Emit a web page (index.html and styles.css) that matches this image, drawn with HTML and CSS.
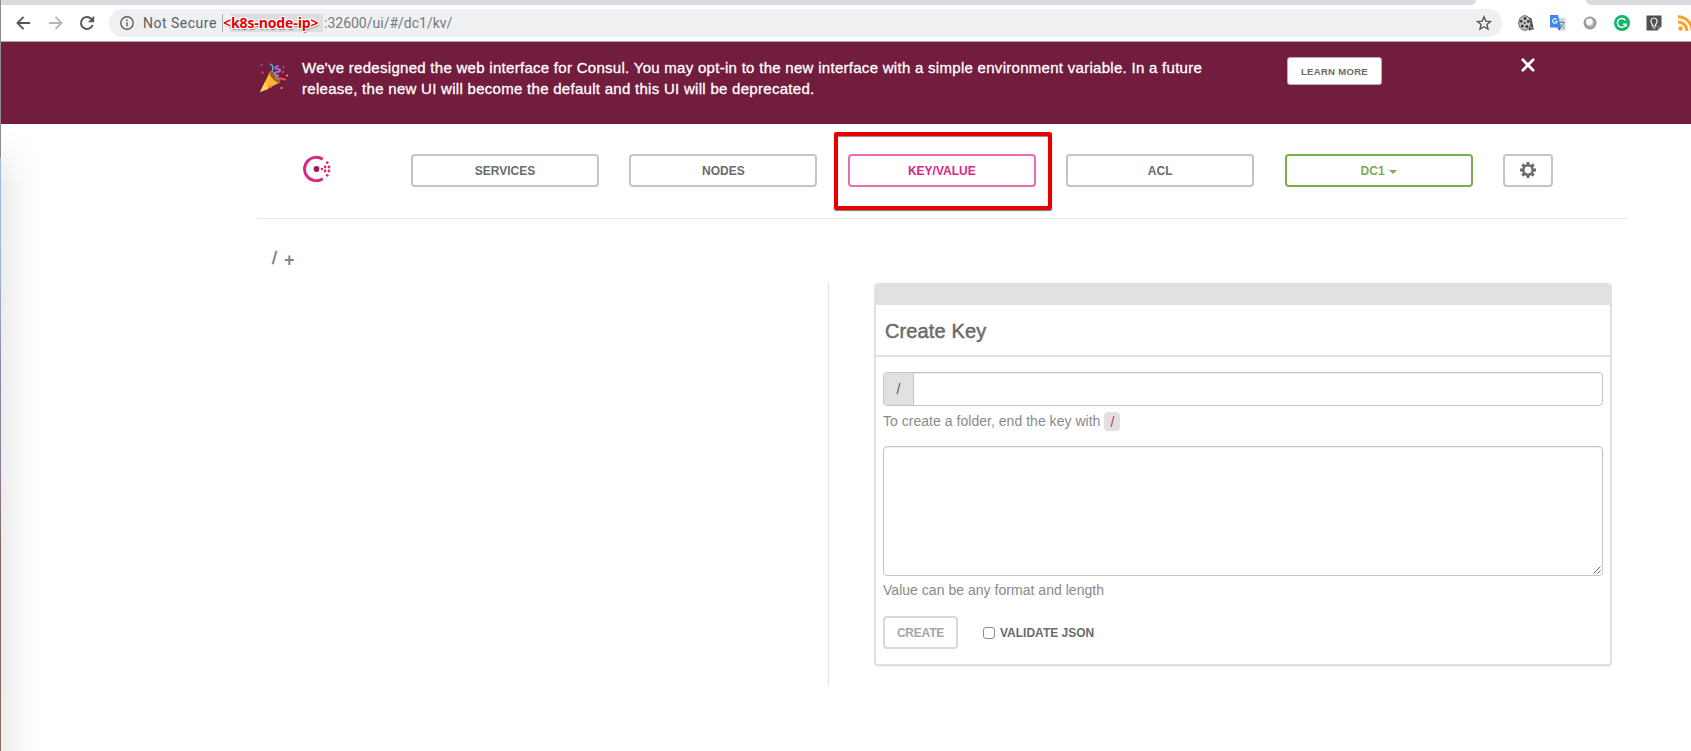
FILE: index.html
```html
<!DOCTYPE html>
<html lang="en">
<head>
<meta charset="utf-8">
<title>Consul</title>
<link rel="stylesheet" href="styles.css">
</head>
<body>
<div class="window">
  <div class="desktop-edge"></div>
  <div class="browser">
    <div class="tabstrip"><span class="tabs-left"></span><span class="tabs-right"></span></div>
    <div class="toolbar">
      <svg class="nav-icon back" viewBox="0 0 16 16"><path d="M15 8H2M8 1.5 1.6 8 8 14.5" /></svg>
      <svg class="nav-icon forward" viewBox="0 0 16 16"><path d="M1 8h13M8 1.5 14.4 8 8 14.5" /></svg>
      <svg class="nav-icon reload" viewBox="0 0 16 16"><path d="M13.6 10A6 6 0 1 1 12.3 3.8L14 5.5" /><path class="solid" d="M15.2.8v6.4H8.8z" /></svg>
      <div class="omnibox">
        <svg class="info" viewBox="0 0 16 16"><circle cx="8" cy="8" r="6.2" /><path d="M8 7.2v4M8 4.4v1.5" /></svg>
        <span class="secure">Not Secure</span>
        <span class="host">&lt;k8s-node-ip&gt;</span>
        <span class="path">:32600/ui/#/dc1/kv/</span>
        <svg class="star" viewBox="0 0 16 16"><path d="m8 1.8 1.8 4.3 4.7.4-3.6 3 1.1 4.6L8 11.7l-4 2.4 1.1-4.6-3.6-3 4.7-.4z" /></svg>
      </div>
      <div class="extensions">
        <svg viewBox="0 0 16 16"><path d="M7 .5 13.500 3.500l2.300 11-5 1z" fill="#4c4c4c"/><ellipse cx="6.700" cy="8" rx="6" ry="7.300" fill="#c4c4c4" stroke="#666"/><g fill="#3a3a3a"><circle cx="6.700" cy="8" r="1"/><circle cx="7" cy="3.600" r="1.500"/><circle cx="3.200" cy="6.300" r="1.400"/><circle cx="10.300" cy="6.500" r="1.400"/><circle cx="4.300" cy="11" r="1.500"/><circle cx="8.800" cy="11.600" r="1.500"/></g><path d="M12.500 11.500l2 3" stroke="#ccc"/></svg>
        <svg viewBox="0 0 16 16"><path d="M6 3h9.500v12.500H9z" fill="#d5d8dc"/><path d="M9 7.500h6M12 6v1.500M10 13c2-1 3.500-3 4-5.500M10.500 9c1 2 2 3.500 4 4.200" fill="none" stroke="#6f8f9f"/><path d="M0 0h8l3 12.500H0z" fill="#4384f3"/><path d="m7 12.500h4L9.500 15.500z" fill="#2a56c6"/><path d="M6.800 4.600A2.300 2.300 0 1 0 7.200 6.500H5" fill="none" stroke="#fff" stroke-width="1.100"/></svg>
        <svg viewBox="0 0 16 16"><circle cx="8" cy="8" r="6.500" fill="#999"/><circle cx="8" cy="7.500" r="4.200" fill="#c4c4c4"/><circle cx="7.200" cy="6.800" r="3.200" fill="#fafafa"/></svg>
        <svg viewBox="0 0 16 16"><circle cx="8" cy="8" r="8" fill="#15b36c"/><path d="M11.400 5.200A4.400 4.400 0 1 0 12 9.200H8.800M12 9v2.800" fill="none" stroke="#fff" stroke-width="1.500"/></svg>
        <svg viewBox="0 0 16 16"><path d="M.5.500h15v11l-4 4H.5z" fill="#505050"/><path d="M11.500 15.500v-4h4z" fill="#8a8a8a"/><path d="M6.300 9.300C3.500 6.500 5 3 8 3s4.500 3.500 1.700 6.300v1.700H6.300zM6.500 13h3" fill="none" stroke="#fff" stroke-width="1.200"/></svg>
        <svg viewBox="0 0 16 16"><circle cx="2.500" cy="13.500" r="2.200" fill="#f9a02a"/><path d="M0 7a9 9 0 0 1 9 9M0 1.800A14.200 14.200 0 0 1 14.200 16" fill="none" stroke="#f9a02a" stroke-width="3"/></svg>
      </div>
    </div>

    <div class="banner">
      <svg class="party" viewBox="0 0 30 30"><path d="M1 29 11 8.500c4 1 8.500 6 10 11z" fill="#ffb52e"/><path d="m1 29 5-10 3.500 7z" fill="#ffd35c"/><ellipse cx="16" cy="14" rx="3" ry="7.200" transform="rotate(-43 16 14)" fill="#9b6212"/><path d="M11 1c3 1 4 4 2 8" fill="none" stroke="#3fb2ec" stroke-width="1.600"/><path d="M20 3c-5 0-4 3-1 3s3 3-1 3-3 3 0 3-1 3-2 3" fill="none" stroke="#a67ad8" stroke-width="1.700"/><path d="M18 17c2-2 5-2 9 0" fill="none" stroke="#ee5372" stroke-width="1.900"/><g fill="#ee5372"><circle cx="3.500" cy="9.500" r="1.100"/><circle cx="24" cy="9" r="1.100"/><circle cx="12" cy="24" r="1.200"/></g><circle cx="2.500" cy="1.800" r=".9" fill="#3fa0dc"/><circle cx="24.500" cy="4" r=".9" fill="#6688cc"/><g fill="#f7a72d"><circle cx="28" cy="12.500" r="1.100"/><circle cx="22.500" cy="25" r="1.100"/></g></svg>
      <p class="banner-text"><span class="line-one">We've redesigned the web interface for Consul. You may opt-in to the new interface with a simple environment variable. In a future</span><br><span class="line-two">release, the new UI will become the default and this UI will be deprecated.</span></p>
      <a class="learn"><span>LEARN MORE</span></a>
      <svg class="close" viewBox="0 0 14 14"><path d="M1.800 1.800 12.200 12.200M12.200 1.800 1.800 12.200"/></svg>
    </div>

    <div class="page">
      <div class="topbar">
        <svg class="logo" viewBox="0 0 28 28"><path d="M19.800 4.300A11.700 11.700 0 1 0 19.800 23.700" fill="none" stroke="#d62783" stroke-width="2.900"/><circle cx="13.500" cy="14" r="2.900" fill="#961d59"/><g fill="#d62783"><circle cx="18.900" cy="14" r="1.300"/><circle cx="22.100" cy="12" r="1.400"/><circle cx="22.100" cy="16" r="1.400"/><circle cx="26" cy="12" r="1.400"/><circle cx="26" cy="16" r="1.400"/><circle cx="24.200" cy="7.700" r="1.400"/><circle cx="24.200" cy="20.300" r="1.400"/></g></svg>
        <a class="btn"><span>SERVICES</span></a>
        <a class="btn"><span>NODES</span></a>
        <a class="btn active"><span>KEY/VALUE</span><i class="highlight"></i></a>
        <a class="btn"><span>ACL</span></a>
        <a class="btn dc"><span>DC1</span><i class="caret"></i></a>
        <a class="btn settings"><svg viewBox="0 0 16 16"><path class="teeth" d="M8 0v3M8 13v3M0 8h3M13 8h3M2.340 2.340l2.100 2.100M11.560 11.560l2.100 2.100M2.340 13.660l2.100-2.100M11.560 4.440l2.100-2.100"/><circle cx="8" cy="8" r="4.700"/></svg></a>
      </div>
      <div class="crumbs"><span class="slash">/</span><span class="plus">+</span></div>
      <div class="columns">
        <div class="keys"></div>
        <div class="panel">
          <div class="panel-bar"></div>
          <h3 class="panel-title"><span>Create Key</span></h3>
          <div class="panel-body">
            <div class="input-group"><span class="addon">/</span><span class="field"></span></div>
            <p class="help"><span class="help-text">To create a folder, end the key with</span><code>/</code></p>
            <div class="textarea"><svg viewBox="0 0 8 8"><path d="M.5 7.500l7-7M4.500 7.500l3-3"/></svg></div>
            <p class="help value-help"><span class="value-text">Value can be any format and length</span></p>
            <div class="actions"><a class="create"><span>CREATE</span></a><i class="checkbox"></i><span class="validate">VALIDATE JSON</span></div>
          </div>
        </div>
      </div>
    </div>
  </div>
</div>
</body>
</html>
```

FILE: styles.css
```css
* { box-sizing: border-box; }
body { margin: 0; background: #fff; font-family: "Liberation Sans", Arial, sans-serif; overflow: hidden; }
svg { display: block; flex: none; }
.window { display: flex; width: 1691px; height: 751px; }
.desktop-edge { width: 1px; flex: none; background: linear-gradient(#8d8d8d 0, #8d8d8d 157px, #9dbbe2 158px, #9fb4d6 270px, #8b87a4 370px, #8b7f94 470px, #7f625a 560px, #8a6c5c 751px); }
.browser { width: 1690px; flex: none; overflow: hidden; }

.tabstrip { display: flex; justify-content: space-between; height: 5px; }
.tabs-left, .tabs-right { background: #d9dbe0; }
.tabs-left { width: 1475px; border-bottom-right-radius: 6px; }
.tabs-right { width: 105px; border-bottom-left-radius: 6px; }
.toolbar { display: flex; align-items: center; height: 37px; padding: 0 0 1px 15px; border-bottom: 1px solid #a9a9ab; }
.nav-icon { width: 15px; height: 16px; fill: none; stroke: #54575b; stroke-width: 2; }
.forward { margin-left: 17px; stroke: #b5b6b8; }
.reload { margin-left: 16px; width: 16px; }
.reload .solid { fill: #54575b; stroke: none; }
.omnibox { display: flex; align-items: center; width: 1393px; height: 28px; margin-left: 14px; padding: 0 10px 0 10px; border-radius: 14px; background: #eff0f2; font: 14px Roboto, sans-serif; flex: none; }
.info { width: 16px; height: 16px; fill: none; stroke: #5b5e62; stroke-width: 1.4; }
.secure { width: 79px; margin-left: 8px; color: #5c5f63; letter-spacing: .5px; white-space: nowrap; }
.host { width: 101px; height: 18px; border-left: 1px solid #aaa; background: linear-gradient(90deg, #eff0f2 7px, #dcddde 8px); color: #e60000; font: bold 14px/18px "Open Sans", "Noto Sans", sans-serif; letter-spacing: -.1px; text-shadow: 1px 1px #fff, -1px 1px #fff, 1px -1px #fff, -1px -1px #fff, 1px 2px 1px #888; white-space: nowrap; }
.path { margin-left: 1px; color: #76797d; letter-spacing: 0; }
.star { width: 16px; height: 16px; margin-left: auto; fill: none; stroke: #55585c; stroke-width: 1.4; }
.extensions { display: flex; gap: 16px; margin-left: 16px; }
.extensions svg { width: 16px; height: 16px; }

.banner { display: flex; align-items: flex-start; height: 82px; padding-left: 258px; background: #721c3e; color: #fff; }
.party { width: 30px; height: 30px; margin-top: 21px; }
.banner-text { width: 901px; margin: 15px 0 0 13px; font-size: 15px; line-height: 21px; letter-spacing: .285px; -webkit-text-stroke: .3px #fff; white-space: nowrap; }
.learn { display: flex; align-items: center; justify-content: center; width: 95px; height: 28px; margin: 15px 0 0 84px; border: 1px solid #c2aab4; border-radius: 3px; background: #fff; color: #696969; font-size: 9.5px; font-weight: bold; letter-spacing: .32px; }
.close { width: 14px; height: 14px; margin: 16px 0 0 139px; fill: none; stroke: #fff; stroke-width: 2.7; stroke-linecap: round; }

.page { position: relative; height: 627px; padding-left: 256px; }
/* shadow cast by the neighbouring window */
.page::before { content: ""; position: absolute; left: 0; top: 0; width: 44px; height: 627px; background: linear-gradient(90deg, #ececec, #f8f8f8 18px, #fdfdfd 32px, #fff 44px); -webkit-mask-image: linear-gradient(transparent 5px, #000 60px); mask-image: linear-gradient(transparent 5px, #000 60px); }
.topbar { display: flex; align-items: flex-start; width: 1370px; height: 95px; padding: 30px 0 0 46px; border-bottom: 1px solid #e9e9e9; }
.logo { width: 28px; height: 28px; margin: 1px 80px 0 0; }
.btn { position: relative; display: flex; align-items: center; justify-content: center; flex: none; width: 188px; height: 33px; margin-right: 30.4px; border: 2px solid #c4c4c4; border-radius: 4px; color: #6b6b6b; font-size: 12px; font-weight: bold; }
.active { border-color: #e56fae; color: #d62783; }
.highlight { position: absolute; left: -16px; top: -24px; width: 218px; height: 78px; border: 4px solid #e60000; border-radius: 2px; box-shadow: 0 1px 1px #777, inset 0 1px 1px #888; }
.dc { border-color: #7aad4c; color: #7aad4c; }
.caret { margin: 2px 0 0 4px; border: 4px solid transparent; border-top-color: #7aad4c; border-bottom: 0; }
.settings { width: 50px; margin-right: 0; }
.settings svg { width: 16px; height: 16px; margin-top: -1px; fill: none; stroke: #6b6b6b; stroke-width: 2.6; }
.settings .teeth { stroke-width: 3; }

.crumbs { display: flex; height: 64px; padding: 29px 0 0 15px; color: #858585; font-size: 18px; line-height: 20px; }
.slash { width: 12px; -webkit-text-stroke: .6px #858585; }
.plus { padding-top: 2px; font-weight: bold; font-size: 18px; }

.columns { display: flex; }
.keys { width: 572px; height: 403px; border-right: 1px solid #e2e2e2; }
.panel { width: 738px; height: 383px; margin-left: 45px; border: 2px solid #e1e1e1; border-top: 0; border-radius: 4px; box-shadow: 0 1px 1px #eee; overflow: hidden; }
.panel-bar { height: 22px; background: #e1e1e1; }
.panel-title { height: 52px; margin: 0; padding: 0 9px; border-bottom: 2px solid #e1e1e1; color: #6b6b6b; font-size: 20px; font-weight: normal; line-height: 52px; letter-spacing: .13px; -webkit-text-stroke: .5px #6b6b6b; }
.panel-body { padding: 15px 7px; }
.input-group { display: flex; height: 34px; border: 1px solid #c4c4c4; border-radius: 4px; overflow: hidden; }
.addon { width: 30px; border-right: 1px solid #c4c4c4; background: #e1e1e1; color: #555; font-size: 14px; line-height: 32px; text-align: center; }
.field { flex: 1; box-shadow: inset 0 1px 1px #eee; }
.help { display: flex; height: 40px; margin: 0; padding-top: 6px; color: #8a8a8a; font-size: 14px; line-height: 19px; letter-spacing: .03px; white-space: nowrap; }
code { width: 16px; height: 19px; margin-left: 4px; border-radius: 4px; background: #e1e1e1; color: #d62783; font: 14px/20px "Liberation Sans", sans-serif; text-align: center; }
.textarea { display: flex; align-items: flex-end; justify-content: flex-end; height: 130px; padding: 1px; border: 1px solid #c4c4c4; border-radius: 4px; box-shadow: inset 0 1px 1px #eee; }
.textarea svg { width: 8px; height: 8px; fill: none; stroke: #555; stroke-width: .9; }
.value-help { padding-top: 5px; }
.actions { display: flex; align-items: center; height: 33px; color: #6b6b6b; font-size: 12px; font-weight: bold; }
.create { display: flex; align-items: center; justify-content: center; width: 75px; height: 33px; border: 2px solid #d8d8d8; border-radius: 4px; color: #a6a6a6; }
.create span { letter-spacing: -.2px; }
.checkbox { width: 12px; height: 12px; margin-left: 25px; border: 1px solid #8c8c8c; border-radius: 3px; }
.validate { margin-left: 5px; white-space: nowrap; }
```
